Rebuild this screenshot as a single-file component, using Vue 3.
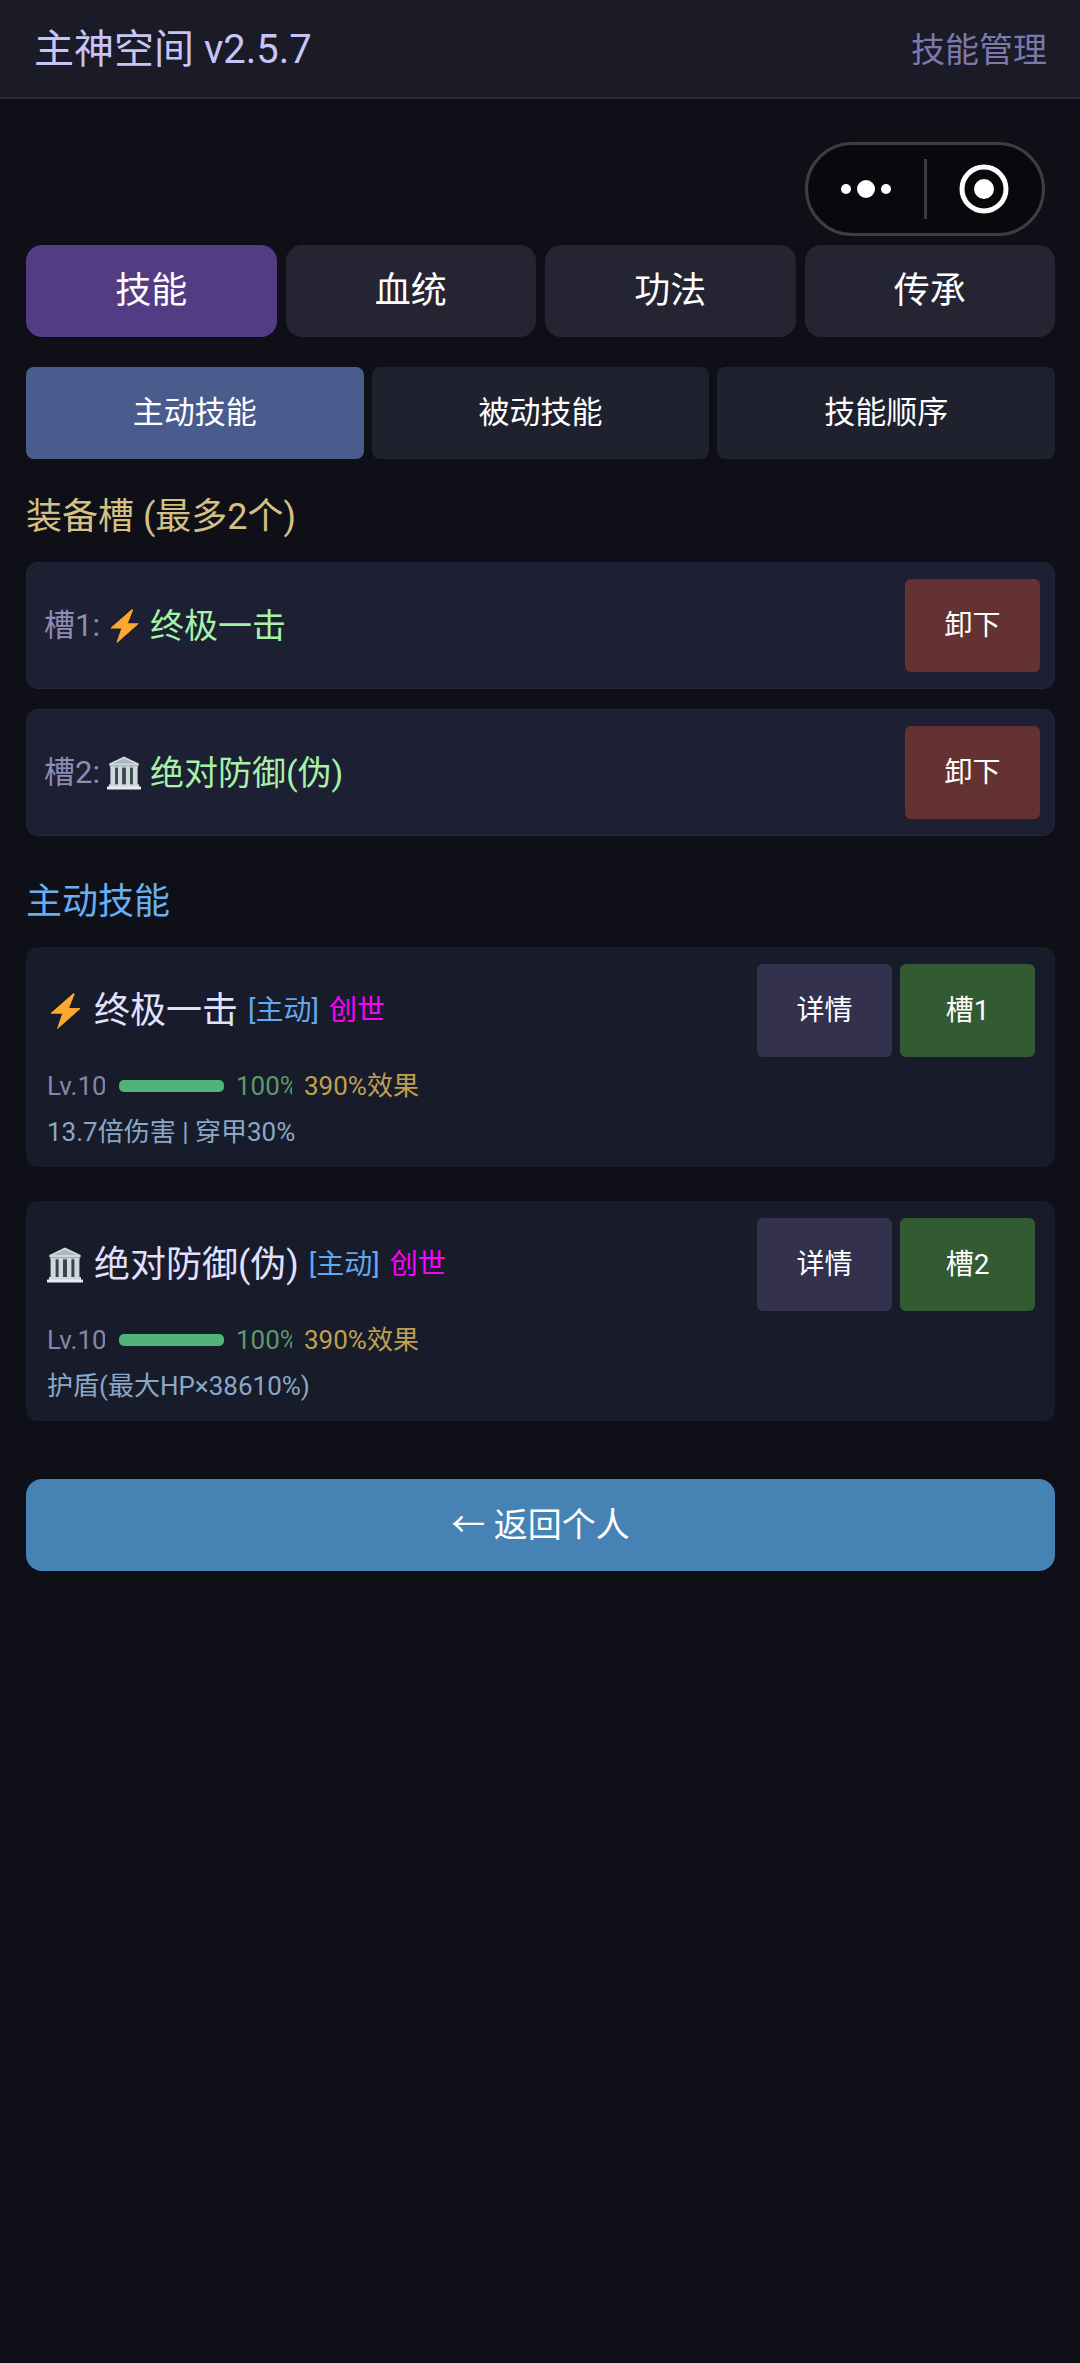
<script setup>
import { ref } from 'vue'

const mainTabs = ['技能', '血统', '功法', '传承']
const subTabs = ['主动技能', '被动技能', '技能顺序']
const activeMain = ref(0)
const activeSub = ref(0)

const slots = [
  { label: '槽1:', icon: 'bolt', name: '终极一击' },
  { label: '槽2:', icon: 'temple', name: '绝对防御(伪)' },
]

const skills = [
  {
    icon: 'bolt',
    name: '终极一击',
    type: '[主动]',
    rank: '创世',
    level: 'Lv.10',
    progress: 100,
    effect: '390%效果',
    desc: '13.7倍伤害 | 穿甲30%',
    slot: '槽1',
  },
  {
    icon: 'temple',
    name: '绝对防御(伪)',
    type: '[主动]',
    rank: '创世',
    level: 'Lv.10',
    progress: 100,
    effect: '390%效果',
    desc: '护盾(最大HP×38610%)',
    slot: '槽2',
  },
]
</script>

<template>
  <svg class="sprite" aria-hidden="true">
    <symbol id="bolt" viewBox="0 0 36 36">
      <path
        d="M26.6 .6 4.2 20.2h11.6L10.6 35.4 33 15.6H21.4L27.2 1z"
        fill="#fca92d"
        stroke="#fca92d"
        stroke-width="1"
        stroke-linejoin="round"
      />
    </symbol>
    <symbol id="temple" viewBox="0 0 36 36">
      <rect x="4" y="9" width="28" height="22" fill="#37454b" />
      <path d="M18 .6 2.4 8v2.4h31.2V8z" fill="#cfd8dc" />
      <path d="M18 2.6 6.4 8h23.2z" fill="#a9b8bf" />
      <rect x="3.4" y="10.4" width="29.2" height="2" fill="#b0bec5" />
      <g fill="#cfd8dc">
        <rect x="3.6" y="11" width="5" height="20" />
        <rect x="11.6" y="11" width="4.4" height="20" />
        <rect x="20" y="11" width="4.4" height="20" />
        <rect x="27.4" y="11" width="5" height="20" />
      </g>
      <rect x="2" y="30" width="32" height="3" fill="#cfd8dc" />
      <rect x="0" y="32.4" width="36" height="3" rx=".6" fill="#e6ecef" />
    </symbol>
  </svg>

  <div class="page">
    <header class="topbar">
      <h1>主神空间 v2.5.7</h1>
      <span class="section">技能管理</span>
    </header>

    <div class="capsule">
      <button type="button" aria-label="更多">
        <svg width="50" height="20" viewBox="0 0 50 20" fill="#fff">
          <circle cx="5" cy="10" r="5" />
          <circle cx="25" cy="10" r="9" />
          <circle cx="45" cy="10" r="5" />
        </svg>
      </button>
      <i class="divider"></i>
      <button type="button" aria-label="关闭">
        <svg width="50" height="50" viewBox="0 0 50 50">
          <circle cx="25" cy="25" r="22" fill="none" stroke="#fff" stroke-width="5" />
          <circle cx="25" cy="25" r="10" fill="#fff" />
        </svg>
      </button>
    </div>

    <main>
      <nav class="tabs main-tabs">
        <button
          v-for="(tab, i) in mainTabs"
          :key="tab"
          type="button"
          :class="{ active: i === activeMain }"
          @click="activeMain = i"
        >{{ tab }}</button>
      </nav>

      <nav class="tabs sub-tabs">
        <button
          v-for="(tab, i) in subTabs"
          :key="tab"
          type="button"
          :class="{ active: i === activeSub }"
          @click="activeSub = i"
        >{{ tab }}</button>
      </nav>

      <section>
        <h2 class="gold">装备槽 (最多2个)</h2>
        <ul class="slots">
          <li v-for="slot in slots" :key="slot.label" class="slot">
            <span class="slot-label">{{ slot.label }}</span>
            <svg class="slot-icon" aria-hidden="true"><use :href="'#' + slot.icon" /></svg>
            <span class="slot-name">{{ slot.name }}</span>
            <button type="button" class="action remove">卸下</button>
          </li>
        </ul>
      </section>

      <section>
        <h2 class="blue">主动技能</h2>
        <ul class="skills">
          <li v-for="skill in skills" :key="skill.name" class="skill">
            <div class="skill-head">
              <svg class="skill-icon" aria-hidden="true"><use :href="'#' + skill.icon" /></svg>
              <h3>{{ skill.name }}</h3>
              <span class="type">{{ skill.type }}</span>
              <span class="rank">{{ skill.rank }}</span>
              <div class="actions">
                <button type="button" class="action detail">详情</button>
                <button type="button" class="action equip">{{ skill.slot }}</button>
              </div>
            </div>
            <div class="meta">
              <span class="level">{{ skill.level }}</span>
              <div class="bar"><div class="fill" :style="{ width: skill.progress + '%' }"></div></div>
              <span class="percent">{{ skill.progress }}%</span>
              <span class="effect">{{ skill.effect }}</span>
            </div>
            <p class="desc">{{ skill.desc }}</p>
          </li>
        </ul>
      </section>

      <button type="button" class="back">← 返回个人</button>
    </main>
  </div>
</template>

<style>
body {
  margin: 0;
  background: #0f0f18;
}
</style>

<style scoped>
.sprite {
  position: absolute;
  width: 0;
  height: 0;
}

.page {
  position: relative;
  min-height: 100vh;
  background: #0f0f18;
  color: #fff;
  font-family: Roboto, "Noto Sans CJK SC", sans-serif;
}

button {
  margin: 0;
  padding: 0;
  border: 0;
  color: #fff;
  font-family: inherit;
  line-height: 48px;
  cursor: pointer;
}

h1,
h2,
h3,
p,
ul {
  margin: 0;
  padding: 0;
  font-weight: 400;
  list-style: none;
}

.topbar {
  display: flex;
  align-items: center;
  justify-content: space-between;
  box-sizing: border-box;
  height: 99px;
  padding: 2px 33px 0 34px;
  background: #1b1a27;
  border-bottom: 2px solid #2a2a3e;
}

h1 {
  color: #c8c4f8;
  font-size: 40px;
  line-height: 56px;
}

.section {
  color: #7c79aa;
  font-size: 34px;
  line-height: 48px;
}

.capsule {
  position: absolute;
  top: 142px;
  right: 35px;
  display: flex;
  align-items: center;
  box-sizing: border-box;
  width: 240px;
  height: 94px;
  background: #08080d;
  border: 3px solid #3e3d43;
  border-radius: 47px;
}

.capsule button {
  display: flex;
  flex: 1;
  align-items: center;
  justify-content: center;
  background: none;
}

.divider {
  width: 3px;
  height: 60px;
  background: #3a3a40;
}

main {
  padding: 146px 25px 0 26px;
}

.tabs {
  display: flex;
}

.tabs button {
  flex: 1;
  height: 92px;
}

.main-tabs {
  gap: 9px;
}

.main-tabs button {
  background: #252433;
  border-radius: 16px;
  font-size: 36px;
}

.main-tabs .active {
  background: #533c83;
}

.sub-tabs {
  gap: 8px;
  margin-top: 30px;
}

.sub-tabs button {
  background: #20212f;
  border-radius: 8px;
  font-size: 31px;
}

.sub-tabs .active {
  background: #4a5c8d;
}

h2 {
  font-size: 36px;
  line-height: 50px;
}

.gold {
  margin-top: 33px;
  color: #d4c084;
}

.blue {
  margin-top: 41px;
  color: #66aff5;
}

.slots {
  display: grid;
  gap: 20px;
  margin-top: 20px;
}

.slot {
  display: flex;
  align-items: center;
  padding: 16px 14px 16px 17px;
  background: #1d1f32;
  border: 1px solid #25263a;
  border-radius: 12px;
}

.slot-label {
  color: #8e8bb4;
  font-size: 31px;
  line-height: 48px;
}

.slot-icon {
  width: 34px;
  height: 34px;
  margin: 0 9px 0 7px;
}

.slot-name {
  color: #a6f2a8;
  font-size: 34px;
  line-height: 48px;
}

.action {
  width: 135px;
  height: 93px;
  border-radius: 6px;
  font-size: 28px;
}

.remove {
  margin-left: auto;
  background: #643232;
}

.detail {
  background: #34314f;
}

.equip {
  background: #325b32;
}

.skills {
  display: grid;
  gap: 34px;
  margin-top: 20px;
}

.skill {
  padding: 17px 20px 16px 21px;
  background: #181b2a;
  border-radius: 12px;
}

.skill-head {
  display: flex;
  align-items: center;
}

.skill-icon {
  width: 36px;
  height: 36px;
}

h3 {
  margin-left: 11px;
  color: #e2e0ff;
  font-size: 36px;
  line-height: 50px;
}

.type,
.rank {
  margin-left: 10px;
  font-size: 28px;
  line-height: 38px;
}

.type {
  color: #62a8ee;
}

.rank {
  color: #f0f;
}

.actions {
  display: flex;
  gap: 8px;
  margin-left: auto;
}

.meta {
  display: flex;
  align-items: center;
  margin-top: 10px;
  font-size: 26px;
  line-height: 38px;
}

.level,
.percent {
  overflow: hidden;
  white-space: nowrap;
}

.level {
  width: 58px;
  color: #8886a8;
}

.bar {
  width: 105px;
  height: 12px;
  margin: 0 12px 0 14px;
  overflow: hidden;
  background: #2a2a3e;
  border-radius: 5px;
}

.fill {
  height: 100%;
  background: #50b478;
}

.percent {
  width: 56px;
  margin-right: 12px;
  color: #5c9a68;
}

.effect {
  color: #c0a050;
}

.desc {
  margin-top: 8px;
  color: #8aa8c6;
  font-size: 26px;
  line-height: 38px;
}

.back {
  display: block;
  width: 100%;
  height: 92px;
  margin-top: 58px;
  background: #4682b4;
  border-radius: 16px;
  font-size: 34px;
}
</style>
